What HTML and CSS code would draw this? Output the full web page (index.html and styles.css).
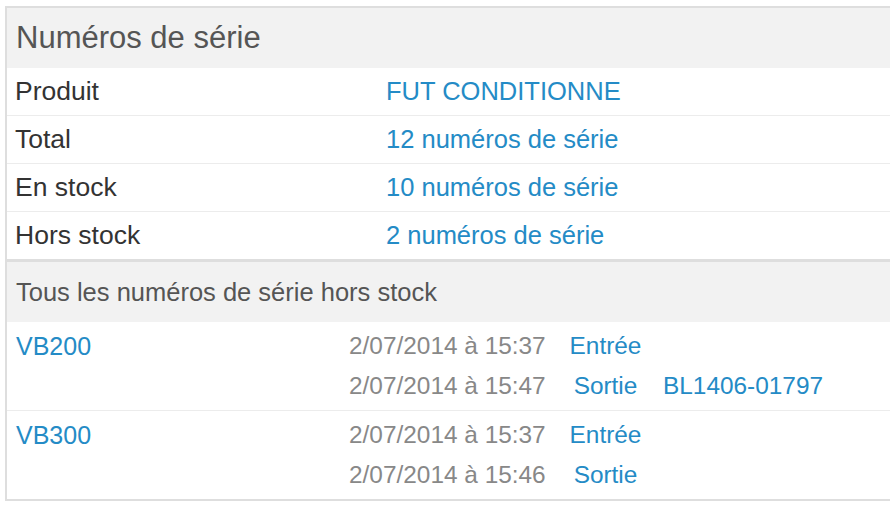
FILE: index.html
```html
<!DOCTYPE html>
<html lang="fr">
<head>
<meta charset="utf-8">
<title>Numéros de série</title>
<link rel="stylesheet" href="styles.css">
</head>
<body>
<div class="panel">
  <div class="panel-head">Numéros de série</div>
  <div class="info">
    <div class="info-row"><span class="label">Produit</span><a class="link">FUT CONDITIONNE</a></div>
    <div class="info-row"><span class="label">Total</span><a class="link">12 numéros de série</a></div>
    <div class="info-row"><span class="label">En stock</span><a class="link">10 numéros de série</a></div>
    <div class="info-row last"><span class="label">Hors stock</span><a class="link">2 numéros de série</a></div>
  </div>
  <div class="sub-head">Tous les numéros de série hors stock</div>
  <div class="serials">
    <div class="serial">
      <a class="link serial-id">VB200</a>
      <div class="moves">
        <div class="move"><span class="date">2/07/2014 à 15:37</span><a class="link type">Entrée</a><span class="ref"></span></div>
        <div class="move"><span class="date">2/07/2014 à 15:47</span><a class="link type">Sortie</a><a class="link ref">BL1406-01797</a></div>
      </div>
    </div>
    <div class="serial">
      <a class="link serial-id">VB300</a>
      <div class="moves">
        <div class="move"><span class="date">2/07/2014 à 15:37</span><a class="link type">Entrée</a><span class="ref"></span></div>
        <div class="move"><span class="date">2/07/2014 à 15:46</span><a class="link type">Sortie</a><span class="ref"></span></div>
      </div>
    </div>
  </div>
</div>
</body>
</html>
```

FILE: styles.css
```css
html, body {
  margin: 0;
  padding: 0;
  overflow: hidden;
  background: #ffffff;
}

body {
  font-family: "Liberation Sans", Arial, Helvetica, sans-serif;
  color: #333333;
}

.panel {
  margin: 6px 0 0 5px;
  width: 900px;
  border: 2px solid #dedede;
  box-sizing: border-box;
}

.panel-head {
  height: 60px;
  display: flex;
  align-items: center;
  padding-left: 9px;
  background: #f2f2f2;
  color: #555555;
  font-size: 31px;
}

.info-row {
  display: grid;
  grid-template-columns: 371px 1fr;
  align-items: center;
  height: 47px;
  padding: 0 8px;
  border-bottom: 1px solid #ececec;
  font-size: 25.5px;
}

.info-row.last {
  border-bottom: 3px solid #dedede;
}

.label {
  color: #333333;
  font-size: 26.5px;
}

.link {
  color: #248bc6;
  text-decoration: none;
}

.sub-head {
  height: 60px;
  display: flex;
  align-items: center;
  padding-left: 9px;
  background: #f2f2f2;
  color: #555555;
  font-size: 25.5px;
}

.serial {
  display: flex;
  padding: 4px 0 4px 9px;
  font-size: 24.4px;
  line-height: 40px;
}

.serial + .serial {
  border-top: 1px solid #ececec;
}

.serial-id {
  width: 333px;
  flex: none;
  font-size: 25px;
}

.move {
  display: grid;
  grid-template-columns: 206px 101px auto;
}

.date {
  color: #888888;
}

.type {
  text-align: center;
}

.ref {
  padding-left: 7px;
}
```
